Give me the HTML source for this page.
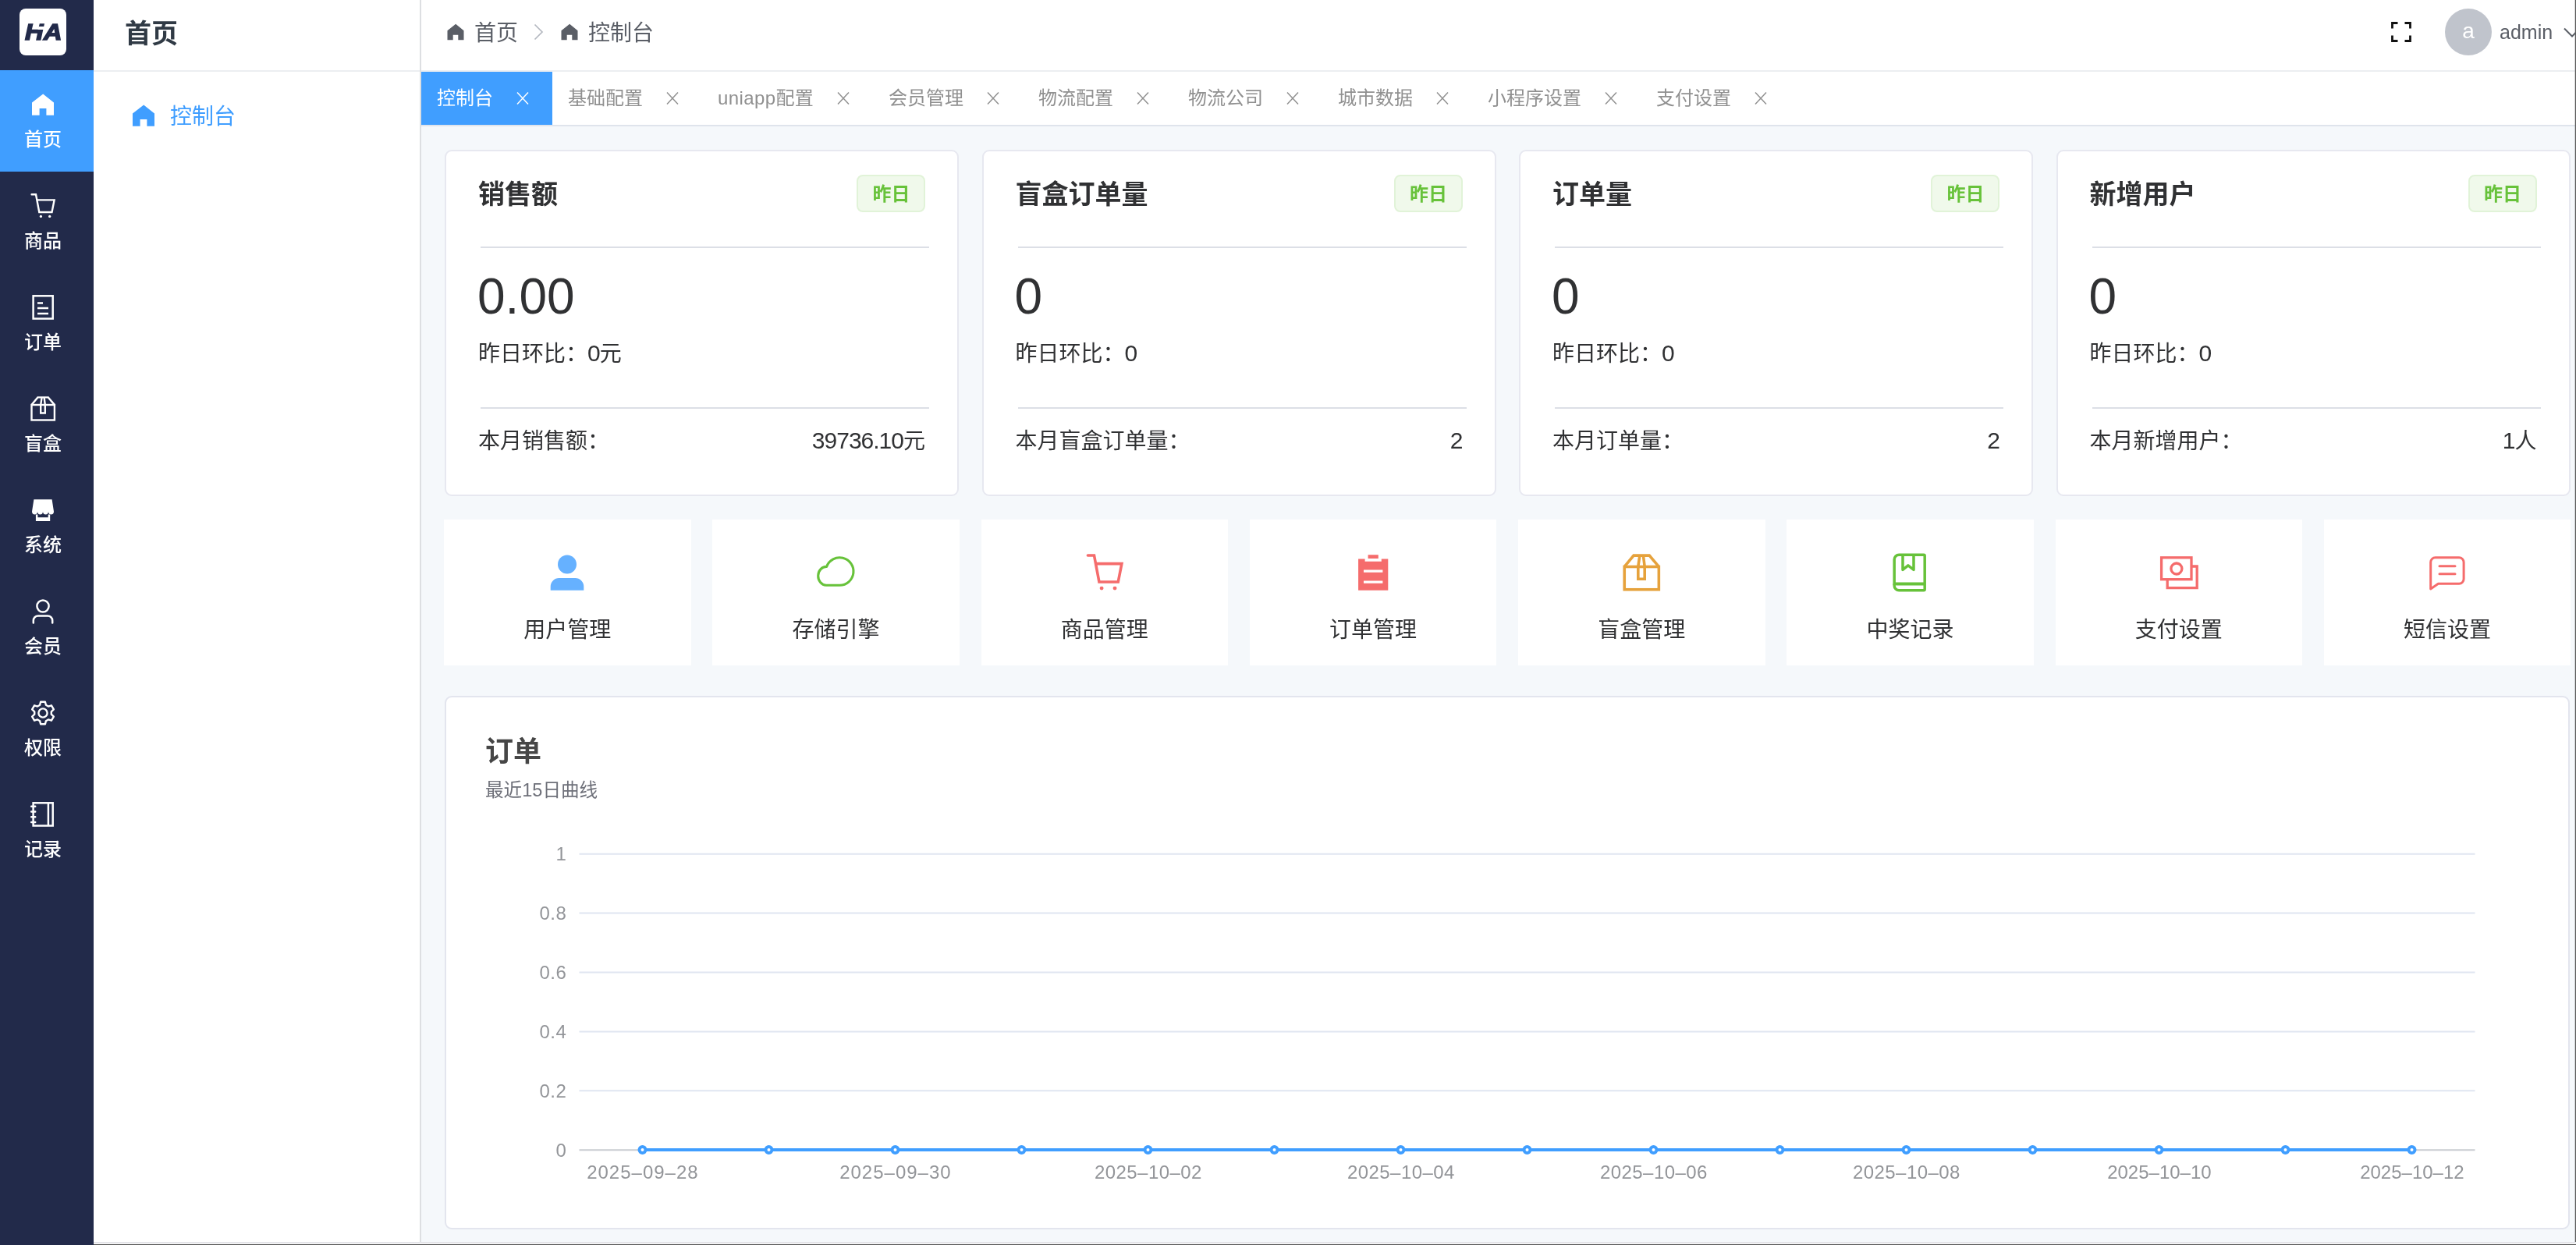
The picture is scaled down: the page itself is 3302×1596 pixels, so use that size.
<!DOCTYPE html>
<html lang="zh-CN">
<head>
<meta charset="utf-8">
<title>控制台</title>
<style>
*{box-sizing:border-box;margin:0;padding:0}
html,body{width:3302px;height:1596px;overflow:hidden;background:#f5f8fb}
body{position:relative;-webkit-font-smoothing:antialiased;font-family:"Liberation Sans","Noto Sans CJK SC",sans-serif;color:#303133}
svg{display:block;position:absolute;overflow:visible}
#side{position:absolute;left:0;top:0;width:120px;height:1596px;background:#222a4a}
#logo{position:absolute;left:25px;top:11px;width:60px;height:60px;background:#fff;border-radius:8px;overflow:hidden}
#logo span{position:absolute;left:4.2px;top:12px;width:54px;text-align:center;font-size:30px;line-height:36px;font-weight:700;font-style:italic;color:#222a4a;letter-spacing:0.6px;-webkit-text-stroke:1.6px #222a4a;transform:scaleX(1.08)}
#logo i{display:block;position:absolute;left:23.5px;top:23.4px;width:9.5px;height:3.6px;background:#fff;transform:skewX(-12deg)}
.nav{position:absolute;left:0;width:120px;height:130px;color:#fff}
.nav.on{background:#409eff}
.nav span{position:absolute;left:0;width:110px;top:73px;text-align:center;font-size:24px;line-height:32px;font-weight:500;white-space:nowrap}
.nav svg{left:39px;top:28px;width:32px;height:32px}
#sub{position:absolute;left:120px;top:0;width:420px;height:1596px;background:#fff;border-right:2px solid #dddfe2}
#subtitle{position:absolute;left:40px;top:21px;font-size:34px;line-height:44px;font-weight:700;color:#303a45;white-space:nowrap}
#subline{position:absolute;left:0;top:90px;width:418px;height:2px;background:#eceef1}
#menu1{position:absolute;left:98px;top:130px;font-size:28px;line-height:40px;color:#409eff;white-space:nowrap}
#head{position:absolute;left:540px;top:0;width:2762px;height:92px;background:#fff;border-bottom:2px solid #eceef1}
.bc{position:absolute;top:23px;font-size:28px;line-height:40px;color:#5a5e66;white-space:nowrap}
#avatar{position:absolute;left:2594px;top:11px;width:60px;height:60px;border-radius:50%;background:#c0c4cc;color:#fff;font-size:28px;line-height:58px;text-align:center}
#uname{position:absolute;left:2664px;top:21px;font-size:25px;line-height:40px;color:#5a5e66}
#tabs{position:absolute;left:540px;top:92px;width:2762px;height:70px;background:#fff;border-bottom:2px solid #dfe4ec}
.tab{position:absolute;top:0;height:68px;font-size:24px;line-height:68px;color:#909090;white-space:nowrap}
.tab.on{background:#409eff;color:#fff}
.tab b{font-weight:400;position:absolute;top:0}
.card{position:absolute;top:192px;width:659px;height:444px;background:#fff;border:2px solid #e7e8f0;border-radius:9px}
.card .t{position:absolute;left:41px;top:33px;font-size:34px;line-height:44px;font-weight:700;color:#303133;white-space:nowrap}
.card .tag{position:absolute;left:526.4px;top:30px;width:88px;height:48px;border:2px solid #e1f3d8;background:#f0f9eb;border-radius:8px;color:#67c23a;font-size:24px;font-weight:700;line-height:46px;text-align:center}
.card .hr{position:absolute;left:44px;width:575px;height:2px;background:#dcdfe6}
.card .num{position:absolute;left:40px;top:146px;font-size:64px;line-height:80px;color:#303133}
.card .cmp{position:absolute;left:41px;top:240px;font-size:28px;line-height:40px;color:#303133;white-space:nowrap}
.card .ml{position:absolute;left:41px;top:352px;font-size:28px;line-height:40px;color:#303133;white-space:nowrap}
.card .mr{position:absolute;right:41px;top:352px;font-size:28px;line-height:40px;color:#303133;white-space:nowrap}
.tile{position:absolute;top:666px;width:316.5px;height:187px;background:#fff}
.tile span{position:absolute;left:0;width:100%;top:122px;text-align:center;font-size:28px;line-height:40px;color:#303133;white-space:nowrap}
.tile svg{left:50%;margin-left:-24.1px;top:43.6px;width:48px;height:48px}
#chart{position:absolute;left:570px;top:892px;width:2724px;height:684px;background:#fff;border:2px solid #e3e5ee;border-radius:9px}
#edgeR{position:absolute;left:3300px;top:0;width:2px;height:1596px;background:linear-gradient(90deg,rgba(90,90,90,.25) 0,rgba(90,90,90,.25) 50%,#5a5a5a 50%)}
#edgeB{position:absolute;left:120px;top:1592px;width:3182px;height:4px;background:linear-gradient(180deg,#e6e6ea 0,#e2e2e7 40%,#fff 40%,#fff 72%,#555 72%)}
#wrap{position:absolute;left:0;top:0;width:3302px;height:1596px;will-change:transform}
.card i{font-style:normal;font-size:30px;letter-spacing:-1px;line-height:36px}
@media (max-width:2400px){html,body{width:1651px;height:798px}#wrap{transform:scale(.5);transform-origin:0 0}}
</style>
</head>
<body>

<div id="wrap">
<div id="side">
<div id="logo"><span>HA</span><i></i></div>
<div class="nav on" style="top:90px"><svg style="" viewBox="0 0 32 32"><path fill="currentColor" d="M16.2,2.4 L30,13.6 V29.8 H20.4 V21 H11.6 V29.8 H2 V13.6Z"/></svg><span>首页</span></div>
<div class="nav" style="top:220px"><svg style="" viewBox="0 0 32 32"><path fill="none" stroke="currentColor" stroke-width="2.4" stroke-linecap="round" stroke-linejoin="miter" d="M1.6,1.3 H7 L11.3,24 H27.5 L30.6,8.4 H8.6"/><circle cx="13.4" cy="29.4" r="1.65" fill="currentColor"/><circle cx="24.7" cy="29.4" r="1.65" fill="currentColor"/></svg><span>商品</span></div>
<div class="nav" style="top:350px"><svg style="" viewBox="0 0 32 32"><g fill="none" stroke="currentColor" stroke-width="2.5"><rect x="3.6" y="1.3" width="25.1" height="29.2"/><path d="M9,10.4 H16 M9,17.1 H23 M9,23.9 H23"/></g></svg><span>订单</span></div>
<div class="nav" style="top:480px"><svg style="" viewBox="0 0 32 32"><g fill="none" stroke="currentColor" stroke-width="2.4" stroke-linejoin="miter"><rect x="1.5" y="11" width="29.4" height="19.5"/><path d="M1.8,10.6 L9.4,1.4 H22.8 L30.6,10.6"/><path d="M14.6,1.4 L13.2,11 V21.5 H18.8 V11 L17.6,1.4"/></g></svg><span>盲盒</span></div>
<div class="nav" style="top:610px"><svg style="" viewBox="0 0 32 32"><path fill="currentColor" d="M4.4,2.2 H27.6 L30,17.8 a3.5,3.6 0 0 1 -7,0 a3.5,3.6 0 0 1 -7,0 a3.5,3.6 0 0 1 -7,0 a3.5,3.6 0 0 1 -7,0Z"/><path fill="currentColor" d="M6.9,21.6 H9.4 V25.2 H22.7 V21.6 H25.2 V29.9 H6.9Z"/></svg><span>系统</span></div>
<div class="nav" style="top:740px"><svg style="" viewBox="0 0 32 32"><g fill="none" stroke="currentColor" stroke-width="2.5" stroke-linecap="round"><circle cx="16" cy="9" r="7.6"/><path d="M3.8,30.4 V27.5 a6,6 0 0 1 6,-6 H22.2 a6,6 0 0 1 6,6 V30.4"/></g></svg><span>会员</span></div>
<div class="nav" style="top:870px"><svg style="" viewBox="0 0 32 32"><g fill="none" stroke="currentColor" stroke-width="2.4" stroke-linejoin="round"><path d="M12.09,5.82 L13.09,1.69 L18.91,1.69 L19.91,5.82 L22.86,7.53 L26.93,6.33 L29.85,11.37 L26.77,14.29 L26.77,17.71 L29.85,20.63 L26.93,25.67 L22.86,24.47 L19.91,26.18 L18.91,30.31 L13.09,30.31 L12.09,26.18 L9.14,24.47 L5.07,25.67 L2.15,20.63 L5.23,17.71 L5.23,14.29 L2.15,11.37 L5.07,6.33 L9.14,7.53Z"/><circle cx="16" cy="16" r="5.6"/></g></svg><span>权限</span></div>
<div class="nav" style="top:1000px"><svg style="" viewBox="0 0 32 32"><g fill="none" stroke="currentColor" stroke-width="2.5"><rect x="3.6" y="1.3" width="25.1" height="29.2"/><path d="M22.9,1.3 V30.5"/><path stroke-linecap="round" d="M1.2,5.8 H6.2 M1.2,12.5 H6.2 M1.2,19.3 H6.2 M1.2,26 H6.2"/></g></svg><span>记录</span></div>
</div>
<div id="sub">
<div id="subtitle">首页</div>
<div id="subline"></div>
<svg style="left:48px;top:132px;width:32px;height:32px;color:#409eff;" viewBox="0 0 32 32"><path fill="currentColor" d="M16.2,2.4 L30,13.6 V29.8 H20.4 V21 H11.6 V29.8 H2 V13.6Z"/></svg>
<div id="menu1">控制台</div>
</div>
<div id="head">
<svg style="left:32px;top:28.8px;width:24px;height:24px;color:#5a5e66;" viewBox="0 0 32 32"><path fill="currentColor" d="M16.2,2.4 L30,13.6 V29.8 H20.4 V21 H11.6 V29.8 H2 V13.6Z"/></svg>
<div class="bc" style="left:68px">首页</div>
<svg style="left:143px;top:30px;width:14px;height:22px" viewBox="0 0 14 22"><path d="M2.5,1.5 L12,11 L2.5,20.5" fill="none" stroke="#b4b8c0" stroke-width="1.7"/></svg>
<svg style="left:178px;top:28.8px;width:24px;height:24px;color:#5a5e66;" viewBox="0 0 32 32"><path fill="currentColor" d="M16.2,2.4 L30,13.6 V29.8 H20.4 V21 H11.6 V29.8 H2 V13.6Z"/></svg>
<div class="bc" style="left:214px">控制台</div>
<svg style="left:2525px;top:28px;width:26px;height:26px" viewBox="0 0 26 26"><path d="M1.5,8.5 V1.5 H8.5 M17.5,1.5 H24.5 V8.5 M24.5,17.5 V24.5 H17.5 M8.5,24.5 H1.5 V17.5" fill="none" stroke="#111" stroke-width="2.8"/></svg>
<div id="avatar">a</div>
<div id="uname">admin</div>
<svg style="left:2746px;top:35px;width:22px;height:14px" viewBox="0 0 22 14"><path d="M1,1.5 L11,11.5 L21,1.5" fill="none" stroke="#5a5e66" stroke-width="2"/></svg>
</div>
<div id="tabs">
<div class="tab on" style="left:0px;width:168px"><b style="left:20px">控制台</b><svg style="left:122px;top:26px;width:16px;height:16px;" viewBox="0 0 16 16"><path fill="none" stroke="currentColor" stroke-width="1.5" d="M1,0.6 L15,15.4 M15,0.6 L1,15.4"/></svg></div>
<div class="tab" style="left:168px;width:192px"><b style="left:20px">基础配置</b><svg style="left:146px;top:26px;width:16px;height:16px;" viewBox="0 0 16 16"><path fill="none" stroke="currentColor" stroke-width="1.5" d="M1,0.6 L15,15.4 M15,0.6 L1,15.4"/></svg></div>
<div class="tab" style="left:360px;width:219px"><b style="left:20px;letter-spacing:.4px">uniapp配置</b><svg style="left:173px;top:26px;width:16px;height:16px;" viewBox="0 0 16 16"><path fill="none" stroke="currentColor" stroke-width="1.5" d="M1,0.6 L15,15.4 M15,0.6 L1,15.4"/></svg></div>
<div class="tab" style="left:579px;width:192px"><b style="left:20px">会员管理</b><svg style="left:146px;top:26px;width:16px;height:16px;" viewBox="0 0 16 16"><path fill="none" stroke="currentColor" stroke-width="1.5" d="M1,0.6 L15,15.4 M15,0.6 L1,15.4"/></svg></div>
<div class="tab" style="left:771px;width:192px"><b style="left:20px">物流配置</b><svg style="left:146px;top:26px;width:16px;height:16px;" viewBox="0 0 16 16"><path fill="none" stroke="currentColor" stroke-width="1.5" d="M1,0.6 L15,15.4 M15,0.6 L1,15.4"/></svg></div>
<div class="tab" style="left:963px;width:192px"><b style="left:20px">物流公司</b><svg style="left:146px;top:26px;width:16px;height:16px;" viewBox="0 0 16 16"><path fill="none" stroke="currentColor" stroke-width="1.5" d="M1,0.6 L15,15.4 M15,0.6 L1,15.4"/></svg></div>
<div class="tab" style="left:1155px;width:192px"><b style="left:20px">城市数据</b><svg style="left:146px;top:26px;width:16px;height:16px;" viewBox="0 0 16 16"><path fill="none" stroke="currentColor" stroke-width="1.5" d="M1,0.6 L15,15.4 M15,0.6 L1,15.4"/></svg></div>
<div class="tab" style="left:1347px;width:216px"><b style="left:20px">小程序设置</b><svg style="left:170px;top:26px;width:16px;height:16px;" viewBox="0 0 16 16"><path fill="none" stroke="currentColor" stroke-width="1.5" d="M1,0.6 L15,15.4 M15,0.6 L1,15.4"/></svg></div>
<div class="tab" style="left:1563px;width:192px"><b style="left:20px">支付设置</b><svg style="left:146px;top:26px;width:16px;height:16px;" viewBox="0 0 16 16"><path fill="none" stroke="currentColor" stroke-width="1.5" d="M1,0.6 L15,15.4 M15,0.6 L1,15.4"/></svg></div>
</div>
<div class="card" style="left:570.0px">
<div class="t">销售额</div><div class="tag">昨日</div>
<div class="hr" style="top:122px"></div>
<div class="num">0.00</div>
<div class="cmp">昨日环比：<i>0</i>元</div>
<div class="hr" style="top:328px"></div>
<div class="ml">本月销售额：</div><div class="mr"><i>39736.10</i>元</div>
</div>
<div class="card" style="left:1258.5px">
<div class="t">盲盒订单量</div><div class="tag">昨日</div>
<div class="hr" style="top:122px"></div>
<div class="num">0</div>
<div class="cmp">昨日环比：<i>0</i></div>
<div class="hr" style="top:328px"></div>
<div class="ml">本月盲盒订单量：</div><div class="mr"><i>2</i></div>
</div>
<div class="card" style="left:1947.0px">
<div class="t">订单量</div><div class="tag">昨日</div>
<div class="hr" style="top:122px"></div>
<div class="num">0</div>
<div class="cmp">昨日环比：<i>0</i></div>
<div class="hr" style="top:328px"></div>
<div class="ml">本月订单量：</div><div class="mr"><i>2</i></div>
</div>
<div class="card" style="left:2635.5px">
<div class="t">新增用户</div><div class="tag">昨日</div>
<div class="hr" style="top:122px"></div>
<div class="num">0</div>
<div class="cmp">昨日环比：<i>0</i></div>
<div class="hr" style="top:328px"></div>
<div class="ml">本月新增用户：</div><div class="mr"><i>1</i>人</div>
</div>
<div class="tile" style="left:569.00px"><svg style="color:#66b1ff" viewBox="0 0 48 48"><circle cx="24" cy="13.4" r="12" fill="currentColor"/><path fill="currentColor" d="M2.7,46.8 V42 a11,11 0 0 1 11,-11 H34.3 a11,11 0 0 1 11,11 V46.8Z"/></svg><span>用户管理</span></div>
<div class="tile" style="left:913.25px"><svg style="color:#67c23a" viewBox="0 0 48 48"><path fill="none" stroke="currentColor" stroke-width="3.1" stroke-linejoin="round" d="M12,40.3 H29.25 A17.75,17.75 0 1 0 12.6,16.4 A10.6,11.95 0 0 0 12,40.3Z"/></svg><span>存储引擎</span></div>
<div class="tile" style="left:1257.50px"><svg style="color:#f56c6c" viewBox="0 0 32 32"><path fill="none" stroke="currentColor" stroke-width="2.4" stroke-linecap="round" stroke-linejoin="miter" d="M1.6,1.3 H7 L11.3,24 H27.5 L30.6,8.4 H8.6"/><circle cx="13.4" cy="29.4" r="1.65" fill="currentColor"/><circle cx="24.7" cy="29.4" r="1.65" fill="currentColor"/></svg><span>商品管理</span></div>
<div class="tile" style="left:1601.75px"><svg style="color:#f56c6c" viewBox="0 0 48 48"><path fill="currentColor" transform="translate(-0.8,0)" d="M18.4,1.3 H31.6 V6.1 H18.4Z M5.9,6.5 H14.4 V9.7 H35.6 V6.5 H44.1 V46.7 H5.9Z M12.8,20.6 V23.8 H37.2 V20.6Z M12.8,34.6 V37.8 H37.2 V34.6Z" fill-rule="evenodd"/></svg><span>订单管理</span></div>
<div class="tile" style="left:1946.00px"><svg style="color:#e6a23c" viewBox="0 0 32 32"><g fill="none" stroke="currentColor" stroke-width="2.4" stroke-linejoin="miter"><rect x="1.5" y="11" width="29.4" height="19.5"/><path d="M1.8,10.6 L9.4,1.4 H22.8 L30.6,10.6"/><path d="M14.6,1.4 L13.2,11 V21.5 H18.8 V11 L17.6,1.4"/></g></svg><span>盲盒管理</span></div>
<div class="tile" style="left:2290.25px"><svg style="color:#67c23a" viewBox="0 0 48 48"><g fill="none" stroke="currentColor" stroke-width="3.5" stroke-linejoin="round"><path d="M10.2,1.3 H42 a1.2,1.2 0 0 1 1.2,1.2 V45.5 a1.2,1.2 0 0 1 -1.2,1.2 H10.2 a6,6 0 0 1 -6,-6 V7.3 a6,6 0 0 1 6,-6Z"/><path stroke-width="4" d="M4.4,40 a1.6,1.6 0 0 1 1.6,-1.6 H43"/><path stroke-linejoin="round" d="M15,2 V20.4 L21.9,14.9 L29,20.4 V2"/></g></svg><span>中奖记录</span></div>
<div class="tile" style="left:2634.50px"><svg style="color:#f56c6c" viewBox="0 0 48 48"><g fill="none" stroke="currentColor" stroke-width="3.3"><rect x="1.6" y="4.8" width="38.4" height="27.9"/><path d="M40,16 H47.2 V43.6 H9.2 V32.7"/><circle cx="20.9" cy="19" r="7"/></g></svg><span>支付设置</span></div>
<div class="tile" style="left:2978.75px"><svg style="color:#f56c6c" viewBox="0 0 48 48"><g fill="none" stroke="currentColor" stroke-width="3" stroke-linejoin="round" stroke-linecap="round"><path d="M8.7,4.8 H39.1 a6,6 0 0 1 6,6 V32.3 a6,6 0 0 1 -6,6 H12.4 L2.7,45 V10.8 a6,6 0 0 1 6,-6Z"/><path d="M14,15.7 H34 M14,25.8 H34"/></g></svg><span>短信设置</span></div>
<div id="chart">
<svg style="left:0;top:0;width:2720px;height:679px" viewBox="0 0 2720 679" font-family="'Liberation Sans','Noto Sans CJK SC',sans-serif">
<text x="50.0" y="82.0" font-size="36" font-weight="700" fill="#464646">订单</text>
<text x="50.0" y="127.0" font-size="23.6" fill="#6e7079">最近15日曲线</text>
<path d="M170.5,580.2 H2600.5" stroke="#c9ccd1" stroke-width="2" fill="none"/>
<text x="154.3" y="588.7" font-size="24" fill="#939599" text-anchor="end" letter-spacing="0.5">0</text>
<path d="M170.5,504.3 H2600.5" stroke="#e0e6f1" stroke-width="2" fill="none"/>
<text x="154.3" y="512.8" font-size="24" fill="#939599" text-anchor="end" letter-spacing="0.5">0.2</text>
<path d="M170.5,428.4 H2600.5" stroke="#e0e6f1" stroke-width="2" fill="none"/>
<text x="154.3" y="436.9" font-size="24" fill="#939599" text-anchor="end" letter-spacing="0.5">0.4</text>
<path d="M170.5,352.5 H2600.5" stroke="#e0e6f1" stroke-width="2" fill="none"/>
<text x="154.3" y="361.0" font-size="24" fill="#939599" text-anchor="end" letter-spacing="0.5">0.6</text>
<path d="M170.5,276.6 H2600.5" stroke="#e0e6f1" stroke-width="2" fill="none"/>
<text x="154.3" y="285.1" font-size="24" fill="#939599" text-anchor="end" letter-spacing="0.5">0.8</text>
<path d="M170.5,200.7 H2600.5" stroke="#e0e6f1" stroke-width="2" fill="none"/>
<text x="154.3" y="209.2" font-size="24" fill="#939599" text-anchor="end" letter-spacing="0.5">1</text>
<path d="M251.5,580.0 H2519.5" stroke="#409eff" stroke-width="4" fill="none"/>
<circle cx="251.5" cy="580.0" r="4" fill="#fff" stroke="#409eff" stroke-width="4"/>
<text x="251.9" y="616.8" font-size="24" fill="#939599" text-anchor="middle" letter-spacing="1">2025–09–28</text>
<circle cx="413.5" cy="580.0" r="4" fill="#fff" stroke="#409eff" stroke-width="4"/>
<circle cx="575.5" cy="580.0" r="4" fill="#fff" stroke="#409eff" stroke-width="4"/>
<text x="575.9" y="616.8" font-size="24" fill="#939599" text-anchor="middle" letter-spacing="1">2025–09–30</text>
<circle cx="737.5" cy="580.0" r="4" fill="#fff" stroke="#409eff" stroke-width="4"/>
<circle cx="899.5" cy="580.0" r="4" fill="#fff" stroke="#409eff" stroke-width="4"/>
<text x="899.9" y="616.8" font-size="24" fill="#939599" text-anchor="middle" letter-spacing="0.45">2025–10–02</text>
<circle cx="1061.5" cy="580.0" r="4" fill="#fff" stroke="#409eff" stroke-width="4"/>
<circle cx="1223.5" cy="580.0" r="4" fill="#fff" stroke="#409eff" stroke-width="4"/>
<text x="1223.9" y="616.8" font-size="24" fill="#939599" text-anchor="middle" letter-spacing="0.45">2025–10–04</text>
<circle cx="1385.5" cy="580.0" r="4" fill="#fff" stroke="#409eff" stroke-width="4"/>
<circle cx="1547.5" cy="580.0" r="4" fill="#fff" stroke="#409eff" stroke-width="4"/>
<text x="1547.9" y="616.8" font-size="24" fill="#939599" text-anchor="middle" letter-spacing="0.45">2025–10–06</text>
<circle cx="1709.5" cy="580.0" r="4" fill="#fff" stroke="#409eff" stroke-width="4"/>
<circle cx="1871.5" cy="580.0" r="4" fill="#fff" stroke="#409eff" stroke-width="4"/>
<text x="1871.9" y="616.8" font-size="24" fill="#939599" text-anchor="middle" letter-spacing="0.45">2025–10–08</text>
<circle cx="2033.5" cy="580.0" r="4" fill="#fff" stroke="#409eff" stroke-width="4"/>
<circle cx="2195.5" cy="580.0" r="4" fill="#fff" stroke="#409eff" stroke-width="4"/>
<text x="2195.9" y="616.8" font-size="24" fill="#939599" text-anchor="middle" letter-spacing="0">2025–10–10</text>
<circle cx="2357.5" cy="580.0" r="4" fill="#fff" stroke="#409eff" stroke-width="4"/>
<circle cx="2519.5" cy="580.0" r="4" fill="#fff" stroke="#409eff" stroke-width="4"/>
<text x="2519.9" y="616.8" font-size="24" fill="#939599" text-anchor="middle" letter-spacing="0">2025–10–12</text>
</svg>
</div>
<div id="edgeR"></div><div id="edgeB"></div>
</div>
</body>
</html>
